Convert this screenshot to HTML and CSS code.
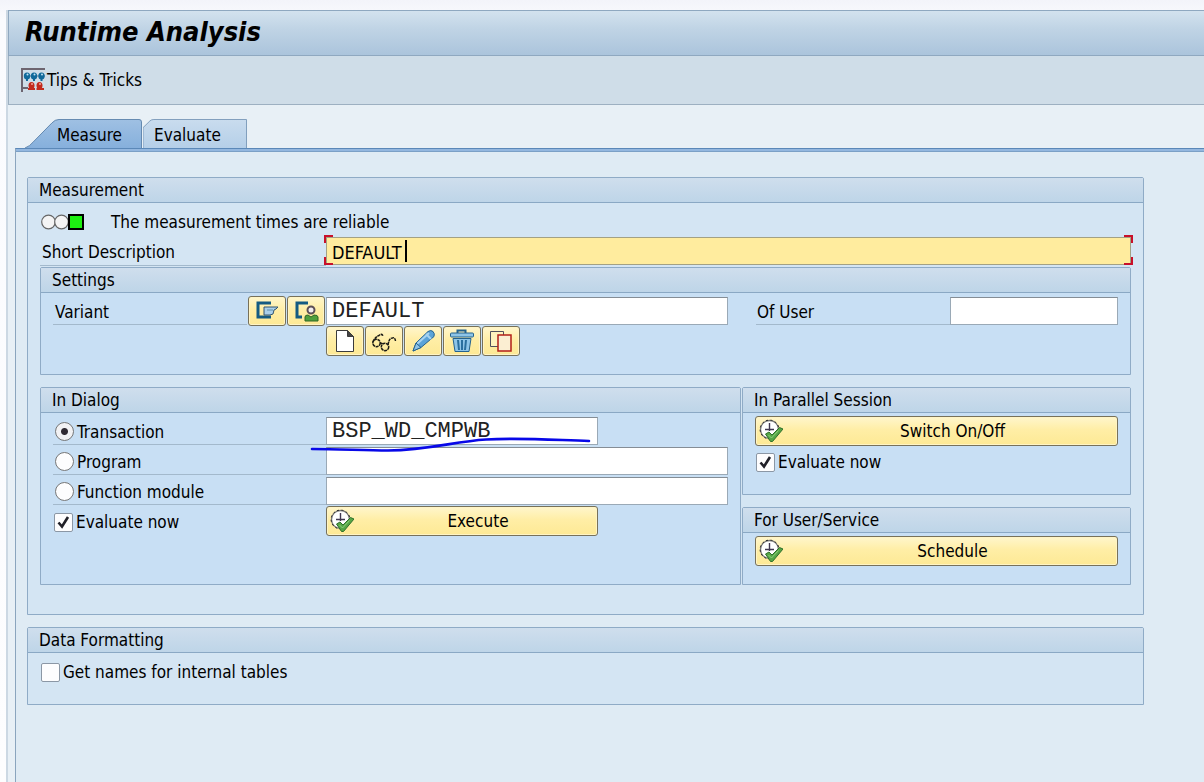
FILE: index.html
```html
<!DOCTYPE html>
<html lang="en">
<head>
<meta charset="utf-8">
<title>Runtime Analysis</title>
<link rel="stylesheet" href="styles.css">
</head>
<body>
<svg class="defs" aria-hidden="true">
  <symbol id="clock-check" viewBox="0 0 24 24">
    <circle cx="10.500" cy="10.500" r="9" fill="#fff" stroke="#777" stroke-width="1.300"/>
    <circle cx="10.500" cy="10.500" r="9.400" fill="none" stroke="#222" stroke-width="1" stroke-dasharray="2 2.500"/>
    <path d="M10.500 4v8M6 10.500h9" stroke="#403850" stroke-width="1.400" fill="none"/>
    <path d="M6.500 15l3.500-2 3 3 7.500-7.500 3.500 1.500-10.500 12.500h-2z" fill="#55a646" stroke="#2f6f2a" stroke-width="1"/>
    <path d="M9.500 16l3 3 7-7.500" stroke="#8fd07c" stroke-width="1" fill="none"/>
  </symbol>
</svg>
<div class="window">
  <header class="titlebar"><h1>Runtime Analysis</h1></header>
  <div class="toolbar">
    <button class="tool" type="button">
      <svg class="tool-icon" viewBox="0 0 24 24" aria-hidden="true">
        <path d="M1 24V1h23M1 20h6" fill="none" stroke="#6d6570" stroke-width="2"/>
        <path d="M3 8h21" stroke="#6d7f90" stroke-width="1"/>
        <g fill="#11699a"><ellipse cx="6" cy="8" rx="3.200" ry="3.600"/><ellipse cx="13" cy="8" rx="3.200" ry="3.600"/><ellipse cx="20.500" cy="8" rx="3.200" ry="3.600"/><path d="M5 11h2v2H5zM12 11h2v2h-2zM19.500 11h2v2h-2z"/></g>
        <g fill="#c3291d"><ellipse cx="10.500" cy="17.500" rx="3" ry="3.600"/><ellipse cx="18.500" cy="17.500" rx="3" ry="3.600"/><path d="M7 20h7v2H7zM15.500 20H23v2h-7.500z"/></g>
        <g fill="#bfe2f3"><circle cx="6.500" cy="6.500" r="1"/><circle cx="13.500" cy="6.500" r="1"/><circle cx="21" cy="6.500" r="1"/></g>
        <g fill="#f0a79b"><circle cx="11" cy="16" r="1"/><circle cx="19" cy="16" r="1"/></g>
      </svg>
      <span>Tips &amp; Tricks</span>
    </button>
  </div>
  <nav class="tabs" role="tablist">
    <button class="tab tab-measure" type="button" role="tab" aria-selected="true">
      <svg class="tab-shape" viewBox="0 0 117 30" preserveAspectRatio="none" aria-hidden="true">
        <defs><linearGradient id="ga" x2="0" y2="1"><stop offset="0" stop-color="#9fc0e3"/><stop offset="1" stop-color="#86b0dc"/></linearGradient></defs>
        <path d="M0 30Q5 28 8 24L27 4Q30 .5 34 .5H114Q116.500 .5 116.500 3V30" fill="url(#ga)" stroke="#6288ae"/>
      </svg>
      <span>Measure</span>
    </button>
    <button class="tab tab-evaluate" type="button" role="tab" aria-selected="false">
      <svg class="tab-shape" viewBox="0 0 105 30" preserveAspectRatio="none" aria-hidden="true">
        <defs><linearGradient id="gb" x2="0" y2="1"><stop offset="0" stop-color="#c9dcee"/><stop offset="1" stop-color="#b5cfe8"/></linearGradient></defs>
        <path d="M0 30V9L7 2Q8.500 .5 11 .5H104.500V30" fill="url(#gb)" stroke="#7f9dbb"/>
      </svg>
      <span>Evaluate</span>
    </button>
  </nav>
  <main class="panel">
    <section class="group">
      <h2>Measurement</h2>
      <div class="group-body">
        <div class="status">
          <svg class="lights" viewBox="0 0 43 16" aria-hidden="true">
            <circle cx="7.500" cy="8" r="6.800" fill="#f4f4f4" stroke="#666" stroke-width="1.200"/>
            <circle cx="20.500" cy="8" r="6.800" fill="#f4f4f4" stroke="#666" stroke-width="1.200"/>
            <rect x="28" y="1" width="14" height="14" fill="#1df012" stroke="#000" stroke-width="2"/>
          </svg>
          <span>The measurement times are reliable</span>
        </div>
        <div class="row row-desc">
          <label class="caption" for="desc">Short Description</label>
          <div class="focused">
            <input class="field field-active" id="desc" type="text" value="DEFAULT">
            <span class="caret"></span>
          </div>
        </div>
        <section class="group inner">
          <h2>Settings</h2>
          <div class="group-body">
            <div class="row row-variant">
              <div class="variant-label">
                <label class="caption" for="variant">Variant</label>
                <button class="btn icon-btn" type="button" aria-label="Get variant">
                  <svg viewBox="0 0 26 24" aria-hidden="true"><path d="M17 4H4v14h13" fill="none" stroke="#145b82" stroke-width="3"/><path d="M10 8h14l-2 2-2 1-1 4-3 1h-6z" fill="#a9cfea" stroke="#33546e"/><path d="M13 11h6" stroke="#5d8fb0"/></svg>
                </button>
                <button class="btn icon-btn" type="button" aria-label="Get user variant">
                  <svg viewBox="0 0 26 24" aria-hidden="true"><path d="M15 4H4v14h5" fill="none" stroke="#145b82" stroke-width="3"/><circle cx="18" cy="11" r="3.500" fill="#f3eef0" stroke="#5b4e56" stroke-width="2"/><path d="M12 22v-4q0-2 3-2l3 2 3-2q4 0 4 2v4z" fill="#4fa03c" stroke="#2e6425"/></svg>
                </button>
              </div>
              <input class="field mono" id="variant" type="text" value="DEFAULT">
              <label class="caption caption-user" for="user">Of User</label>
              <input class="field mono" id="user" type="text">
            </div>
            <div class="actions">
              <button class="btn icon-btn" type="button" aria-label="Create">
                <svg viewBox="0 0 26 24" aria-hidden="true"><path d="M4.500 1.500h11l6 6v15h-17z" fill="#fff" stroke="#3b3b3b"/><path d="M15.500 1.500l6 6h-6z" fill="#444" stroke="#3b3b3b"/></svg>
              </button>
              <button class="btn icon-btn" type="button" aria-label="Display">
                <svg viewBox="0 0 26 24" aria-hidden="true"><g fill="none" stroke="#1b1b16" stroke-width="1.500" stroke-dasharray="3 .6"><circle cx="5.500" cy="14" r="3.700"/><circle cx="14" cy="18" r="3.700"/><path d="M2 13Q4 8 8 6.500Q11 4 12 7M9 14.500q2-1 2.500 1M17 16Q18 9 21.500 9q2.500-1 3 3"/></g></svg>
              </button>
              <button class="btn icon-btn" type="button" aria-label="Change">
                <svg viewBox="0 0 26 24" aria-hidden="true"><path d="M3 22l3-8L18 2.500q3-2 5 0t1 5L11 18.500z" fill="#5ba3d8" stroke="#24628e"/><path d="M7 15L19 4M16 5l5 5" stroke="#a7d3f0" stroke-width="2" fill="none"/><path d="M6 14l5 4.500L3 22z" fill="#8fc3e6" stroke="#24628e"/></svg>
              </button>
              <button class="btn icon-btn" type="button" aria-label="Delete">
                <svg viewBox="0 0 26 24" aria-hidden="true"><path d="M8.500 4.500v-3h8v3" fill="none" stroke="#24628e" stroke-width="2"/><rect x="1.500" y="4" width="23" height="4" rx="1" fill="#8ec5e8" stroke="#24628e"/><path d="M4 9.500h18l-2 13H6z" fill="#8ec5e8" stroke="#24628e"/><path d="M9 11l1 10M13 11v10M17 11l-1 10" stroke="#2a6f9e" stroke-width="2"/></svg>
              </button>
              <button class="btn icon-btn" type="button" aria-label="Copy">
                <svg viewBox="0 0 26 24" aria-hidden="true"><path d="M2.500 2.500h13v15h-13z" fill="#fff3bd" stroke="#50505c"/><path d="M10 6h13v16H10z" fill="#fbeed2" stroke="#b31f17" stroke-width="1.500"/></svg>
              </button>
            </div>
          </div>
        </section>
        <div class="columns">
          <section class="group inner">
            <h2>In Dialog</h2>
            <div class="group-body">
              <div class="row row-choice">
                <label class="caption choice"><input class="radio" type="radio" name="kind" checked><span>Transaction</span></label>
                <div class="marked">
                  <input class="field mono field-short" type="text" value="BSP_WD_CMPWB" aria-label="Transaction name">
                  <svg class="stroke" viewBox="0 0 282 18" aria-hidden="true"><path d="M3 13C30 13 55 14.500 79 14.500C120 14 145 5.500 177 3.500C210 1.500 245 4 280 5" fill="none" stroke="#0808e8" stroke-width="2.600" stroke-linecap="round"/></svg>
                </div>
              </div>
              <div class="row row-choice">
                <label class="caption choice"><input class="radio" type="radio" name="kind"><span>Program</span></label>
                <input class="field mono" type="text" aria-label="Program name">
              </div>
              <div class="row row-choice">
                <label class="caption choice"><input class="radio" type="radio" name="kind"><span>Function module</span></label>
                <input class="field mono" type="text" aria-label="Function module name">
              </div>
              <div class="row row-choice">
                <label class="choice"><input class="check" type="checkbox" checked><span>Evaluate now</span></label>
                <button class="btn wide field-short" type="button"><svg aria-hidden="true"><use href="#clock-check"/></svg><span>Execute</span></button>
              </div>
            </div>
          </section>
          <div class="stack">
            <section class="group inner">
              <h2>In Parallel Session</h2>
              <div class="group-body">
                <div class="row"><button class="btn wide" type="button"><svg aria-hidden="true"><use href="#clock-check"/></svg><span>Switch On/Off</span></button></div>
                <div class="row"><label class="choice"><input class="check" type="checkbox" checked><span>Evaluate now</span></label></div>
              </div>
            </section>
            <section class="group inner">
              <h2>For User/Service</h2>
              <div class="group-body">
                <div class="row"><button class="btn wide" type="button"><svg aria-hidden="true"><use href="#clock-check"/></svg><span>Schedule</span></button></div>
              </div>
            </section>
          </div>
        </div>
      </div>
    </section>
    <section class="group formatting">
      <h2>Data Formatting</h2>
      <div class="group-body">
        <div class="row"><label class="choice"><input class="check" type="checkbox"><span>Get names for internal tables</span></label></div>
      </div>
    </section>
  </main>
</div>
</body>
</html>
```
FILE: styles.css
```css
* { box-sizing: border-box; }

body {
  margin: 0;
  min-height: 100vh;
  display: flex;
  padding: 10px 0 0 6px;
  background: linear-gradient(#f3f4fa, #fafbfe 20px, #fdfdfe);
  color: #000;
  font: 17px/24px "DejaVu Sans Condensed", "DejaVu Sans", sans-serif;
}

button, input { font: inherit; color: inherit; margin: 0; }
h1, h2 { margin: 0; font-weight: normal; }
.defs { position: absolute; width: 0; height: 0; }

.window {
  flex: 1;
  min-width: 0;
  display: flex;
  flex-direction: column;
  border-left: 2px solid #ccd8e3;
  background: #e8f0f6;
}

.titlebar {
  height: 46px;
  padding: 0 16px;
  border: solid #8fa8c0;
  border-width: 1px 0 1px 1px;
  background: linear-gradient(#d3e2ee, #c0d4e5 40%, #abc4dc);
}
h1 { font-size: 27px; line-height: 42px; font-weight: bold; font-style: italic; }

.toolbar {
  height: 49px;
  padding: 8px 12px;
  border: solid #9db0c1;
  border-width: 0 0 1px 1px;
  background: #cfdde8;
}
.tool {
  display: flex;
  align-items: center;
  gap: 2px;
  height: 32px;
  padding: 0;
  border: 0;
  background: none;
}
.tool-icon { width: 24px; height: 24px; }

.tabs {
  display: flex;
  gap: 1px;
  padding: 14px 0 0 17px;
}
.tab {
  position: relative;
  height: 29px;
  padding: 2px 0 0;
  border: 0;
  background: none;
  text-align: left;
}
.tab span { position: relative; }
.tab-measure { width: 117px; padding-left: 32px; }
.tab-evaluate { width: 104px; padding-left: 11px; }
.tab-shape { position: absolute; inset: 0; width: 100%; height: 100%; }

.panel {
  flex: 1;
  margin-left: 7px;
  padding: 28px 60px 24px 11px;
  border-left: 1px solid #8ba5be;
  border-top: 1px solid #5b88b8;
  box-shadow: inset 0 2px #93b7df, inset 0 3px #7ba0c6;
  background: #dfebf4;
  display: flex;
  flex-direction: column;
  gap: 12px;
}

.group { border: 1px solid #8fabc6; border-radius: 2px 2px 0 0; background: #d4e5f3; }
.group > h2 {
  height: 25px;
  padding-left: 11px;
  border-bottom: 1px solid #8aa8c4;
  background: linear-gradient(#cfdeed, #bed5e8);
  font-size: 17px;
  line-height: 24px;
}
.group-body { padding: 3px 12px 29px; }
.formatting > .group-body { padding-bottom: 18px; }
.inner { background: #c8dff4; }
.inner > .group-body { padding-bottom: 18px; }

.row { display: grid; height: 30px; align-items: start; }
.caption {
  height: 29px;
  padding: 4px 2px 0;
  border-bottom: 1px solid #a3b9cc;
}
.row-desc { grid-template-columns: 286px 1fr; height: 31px; }
.row-desc .caption { height: 30px; }
.row-variant { grid-template-columns: 273px minmax(0, 402fr) 222px minmax(0, 168fr); }
.caption-user { margin-left: 28px; padding-left: 1px; }
.row-choice { grid-template-columns: 273px minmax(0, 1fr); }

.status { display: flex; align-items: center; gap: 27px; height: 30px; padding: 2px 0 0 1px; }
.lights { width: 43px; height: 16px; }

.field {
  width: 100%;
  height: 28px;
  margin-top: 1px;
  padding: 0 5px;
  border: 1px solid #9aa9b6;
  border-top-color: #858d95;
  background: #fff;
  outline: 0;
}
.field-active { padding-top: 2px; background: #ffec9e; border-color: #a3a184; font-size: 18px; }
.field-short { max-width: 272px; }
.mono { font-family: "Liberation Mono", monospace; font-size: 22px; line-height: 26px; color: #222; }

.focused { position: relative; }
.focused::after {
  content: "";
  position: absolute;
  inset: -1px -2px 0;
  pointer-events: none;
  --c: linear-gradient(#c8102a, #c8102a);
  background:
    var(--c) 0 0 / 9px 2px, var(--c) 0 0 / 2px 8px,
    var(--c) 100% 0 / 9px 2px, var(--c) 100% 0 / 2px 8px,
    var(--c) 0 100% / 9px 2px, var(--c) 0 100% / 2px 8px,
    var(--c) 100% 100% / 9px 2px, var(--c) 100% 100% / 2px 8px;
  background-repeat: no-repeat;
}
.caret { position: absolute; left: 79px; top: 4px; width: 2px; height: 22px; background: #000; }

.btn {
  height: 30px;
  padding: 0;
  border: 1px solid #77715a;
  border-radius: 3px;
  background: linear-gradient(#fff6cc, #ffeea6 45%, #fde995);
  box-shadow: inset 0 0 0 1px #fff4c4;
}
.icon-btn { width: 38px; display: grid; place-items: center; }
.icon-btn svg { width: 26px; height: 24px; }
.variant-label { display: grid; grid-template-columns: 1fr 38px 38px; gap: 1px; padding-right: 1px; }
.actions { display: flex; gap: 1px; padding-left: 273px; }

.wide {
  width: 100%;
  display: grid;
  grid-template-columns: 24px 1fr;
  align-items: center;
  padding: 0 3px;
}
.wide svg { width: 24px; height: 24px; }
.wide span { padding-left: 8px; }

.choice { display: flex; align-items: center; gap: 3px; height: 30px; padding: 2px 1px 0; }
.caption.choice { height: 29px; padding: 3px 2px 0; }
.radio, .check {
  appearance: none;
  flex: none;
  width: 19px;
  height: 19px;
  border: 1px solid #8b97a5;
  background: #fdfdfe;
}
.radio { border-radius: 50%; border-color: #777; }
.radio:checked { background: radial-gradient(circle, #302a32 3px, #f2f2f4 4px); }
.check { border-radius: 2px; }
.check:checked {
  background: #fdfdfe url("data:image/svg+xml,%3Csvg xmlns='http://www.w3.org/2000/svg' viewBox='0 0 17 17'%3E%3Cpath d='M3.500 8.500l3.500 4 6-9.500' fill='none' stroke='%23202028' stroke-width='2.600'/%3E%3C/svg%3E");
}

.columns { display: grid; grid-template-columns: 701fr 389fr; gap: 1px; margin-top: 12px; }
.stack { display: flex; flex-direction: column; gap: 12px; }

.marked { position: relative; height: 30px; }
.marked .field { display: block; }
.stroke { position: absolute; z-index: 1; left: -17px; top: 20px; width: 282px; height: 18px; pointer-events: none; }
```
